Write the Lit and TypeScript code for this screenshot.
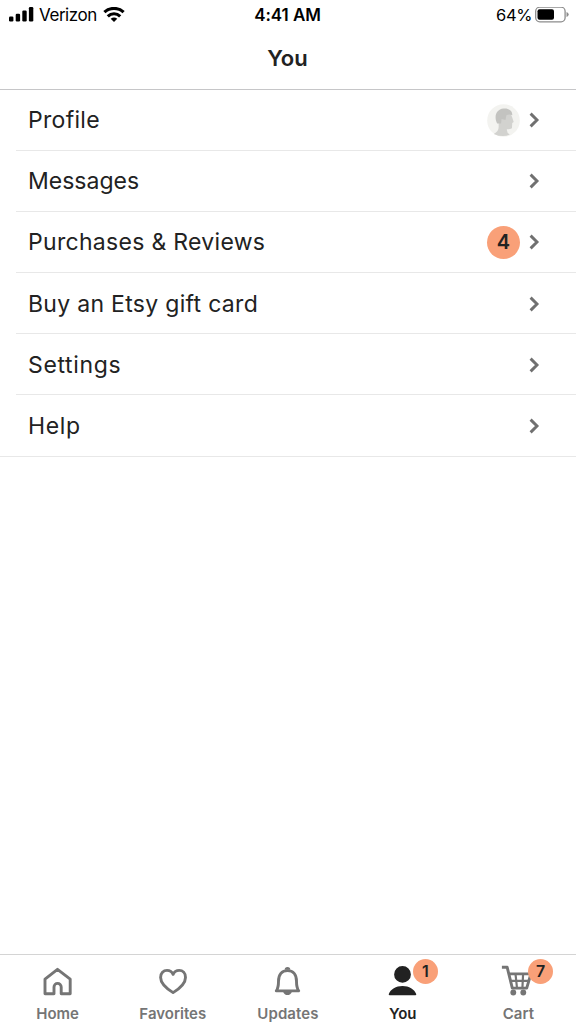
import { LitElement, html, css, svg, nothing } from "lit";
import { customElement } from "lit/decorators.js";

interface Row { label: string; cls: string; avatar?: boolean; count?: number; }
interface Tab { label: string; cls: string; icon: unknown; count?: number; active?: boolean; }

const rows: Row[] = [
  { label: "Profile", cls: "profile", avatar: true },
  { label: "Messages", cls: "messages" },
  { label: "Purchases & Reviews", cls: "purchases", count: 4 },
  { label: "Buy an Etsy gift card", cls: "gift" },
  { label: "Settings", cls: "settings" },
  { label: "Help", cls: "help" },
];

const home = svg`<path d="M5 29.8V15.2L17.5 5.3L30.2 15.2V29.8H21.200V23A3.600 3.600 0 0 0 14 23V29.8Z"/>`;
const heart = svg`<path d="M18.1 28.6C14 26 5.6 20.500 5.600 13.400C5.600 9.200 8.500 6.400 12 6.400C14.700 6.400 17 7.800 18.100 10.300C19.200 7.800 21.500 6.400 24.200 6.400C27.700 6.400 30.500 9.200 30.500 13.400C30.500 20.500 22.200 26 18.100 28.600Z"/>`;
const bell = svg`<path d="M6.300 26.900C8.300 24 8.500 21.500 8.500 17.200C8.500 10.500 11.800 6.600 17.500 6.600S26.500 10.500 26.500 17.200C26.500 21.500 26.700 24 28.700 26.900Z"/><path class="fill" d="M14.700 5.800a2.800 2.800 0 0 1 5.600 0zM13.200 28h8.600c-.7 2-2.300 3.100-4.300 3.100s-3.600-1.100-4.300-3.100z"/>`;
const person = svg`<path class="fill" d="M17.500 2a8.400 8.400 0 1 1 0 16.800a8.400 8.400 0 0 1 0-16.800zM3.700 30.200C5.500 25 11 21.900 17.500 21.900S29.500 25 31.300 30.200Q31.300 31.200 30.300 31.200H4.700Q3.700 31.200 3.700 30.200z"/>`;
const cart = svg`<path d="M1.900 3.300H7.200L12.300 24.100H26.700L30.900 9.900H9"/><path class="thin" d="M10.400 16.900H29.200M15.500 10L17 24M23.100 10L22.400 24"/><circle class="fill" cx="13.300" cy="28.500" r="2.900"/><circle class="fill" cx="23.300" cy="28.500" r="2.900"/>`;

const tabs: Tab[] = [
  { label: "Home", cls: "t-home", icon: home },
  { label: "Favorites", cls: "t-fav", icon: heart },
  { label: "Updates", cls: "t-upd", icon: bell },
  { label: "You", cls: "t-you", icon: person, count: 1, active: true },
  { label: "Cart", cls: "t-cart", icon: cart, count: 7 },
];

@customElement("app-root")
export class AppRoot extends LitElement {
  static styles = css`
    :host { display: flex; flex-direction: column; height: 100vh; overflow: hidden; background: #fff; color: #222; font-family: Inter, "Liberation Sans", sans-serif; }
    * { box-sizing: border-box; }
    svg { display: block; flex: none; }
    .status { display: grid; grid-template-columns: 1fr auto 1fr; align-items: center; height: 29px; padding: 0 7px 0 9px; color: #000; font-size: 17px; line-height: 29px; }
    .left, .right { display: flex; align-items: center; }
    .right { justify-content: flex-end; gap: 3px; }
    .carrier, .time, .percent { padding-top: 1px; line-height: 28px; }
    .carrier { margin: 0 6px 0 5px; letter-spacing: -0.45px; }
    .time { margin: 0 3px 0 0; font-weight: 600; letter-spacing: -0.05px; }
    .percent { font-size: 16.500px; letter-spacing: -0.4px; }
    .title { height: 61px; margin: 0; padding-right: 1px; border-bottom: 1px solid #c6c6c8; text-align: center; font-size: 22px; line-height: 59px; font-weight: 600; }
    .list { display: flex; flex-direction: column; border-bottom: 1px solid #e8e8e8; }
    .row { height: 61px; display: flex; align-items: center; margin-left: 16px; padding: 0 36px 0 12px; border-bottom: 1px solid #e8e8e8; font-size: 23px; }
    .row:nth-child(4), .row:nth-child(5) { padding-top: 1px; }
    .row:last-child { border-bottom: 0; }
    .label { flex: 1; white-space: nowrap; }
    .profile { letter-spacing: 0.3px; }
    .purchases { letter-spacing: 0.3px; }
    .gift { letter-spacing: 0.3px; }
    .settings { letter-spacing: 0.65px; }
    .help { letter-spacing: 0.65px; }
    .count { display: grid; place-items: center; width: 33px; height: 33px; border-radius: 50%; background: #f9a078; font-size: 20px; font-weight: 600; }
    .chevron { margin-left: 8px; }
    .tabs { display: grid; grid-template-columns: repeat(5, 1fr); height: 70px; margin-top: auto; border-top: 1px solid #d4d4d4; }
    .tab { display: flex; flex-direction: column; align-items: center; padding-top: 9px; color: #757575; font-size: 15px; font-weight: 600; line-height: 20px; }
    .tab.active { color: #222; }
    .t-upd { letter-spacing: 0.1px; }
    .t-you { padding-right: 1px; }
    .icon { position: relative; width: 36px; height: 40px; }
    .icon svg { fill: none; stroke: currentColor; stroke-width: 2.9; stroke-linejoin: round; }
    .icon .thin { stroke-width: 2.2; }
    .icon .fill { fill: currentColor; stroke: none; }
    .badge { position: absolute; left: 27.600px; top: -5.500px; width: 25px; height: 25px; border-radius: 50%; background: #f9a078; color: #222; text-align: center; font-size: 16px; line-height: 25px; }
  `;

  render() {
    return html`
      <div class="status">
        <div class="left">
          <svg width="25" height="16" viewBox="0 0 25 16"><rect x="0" y="9.500" width="4.400" height="5" rx="1.200"/><rect x="6.700" y="6.800" width="4.400" height="7.700" rx="1.200"/><rect x="13.300" y="3.500" width="4.400" height="11" rx="1.200"/><rect x="19.900" y="0" width="4.400" height="14.500" rx="1.200"/></svg>
          <span class="carrier">Verizon</span>
          <svg width="22" height="16" viewBox="0 0 22 16"><path fill="none" stroke="#000" stroke-width="3.200" d="M1.400 5.200C6.800 .2 15.200 .2 20.600 5.200M4.800 9.300C8.400 5.900 13.600 5.900 17.200 9.300"/><path d="M11 15L7.700 11.800Q11 9.200 14.300 11.800Z"/></svg>
        </div>
        <div class="time">4:41 AM</div>
        <div class="right">
          <span class="percent">64%</span>
          <svg width="34" height="16" viewBox="0 0 34 16"><rect x=".7" y=".2" width="29.400" height="14.600" rx="4" fill="none" stroke="#8c8c8c" stroke-width="1.300"/><rect x="2.500" y="2.200" width="16.500" height="10.600" rx="2"/><path fill="#8c8c8c" d="M31.500 5Q33.700 5.800 33.700 7.500T31.500 10Z"/></svg>
        </div>
      </div>
      <h1 class="title">You</h1>
      <div class="list">
        ${rows.map((r) => html`
          <div class="row">
            <span class="label"><span class=${r.cls}>${r.label}</span></span>
            ${r.avatar ? html`<svg width="33" height="33" viewBox="0 0 34 34"><circle cx="17" cy="17" r="16.800" fill="#f3f3f0"/><path fill="#d2d2cf" d="M12 13L24 9L26 14L27.500 18.500L26 19.500L25.700 25Q23 26.500 20.500 26Q20 29.500 23.500 31.500Q16 35 7 30.800Q12.500 28 12 22.500Z"/><path fill="#c3c3c0" d="M10.500 20C7 14 9 5.500 17 4.700C22 4 26.500 7 26 11.500Q23 10 20 11.500L19 16.500L15 15.500L14.500 20Z"/></svg>` : nothing}
            ${r.count ? html`<span class="count">${r.count}</span>` : nothing}
            <svg class="chevron" width="12" height="18" viewBox="0 0 12 18"><path d="M2.600 2.600L9 9L2.600 15.400" fill="none" stroke="#707070" stroke-width="2.900"/></svg>
          </div>`)}
      </div>
      <nav class="tabs">
        ${tabs.map((t) => html`
          <div class="tab ${t.active ? "active" : ""}">
            <div class="icon"><svg width="36" height="32" viewBox="0 0 36 32">${t.icon}</svg>${t.count ? html`<span class="badge">${t.count}</span>` : nothing}</div>
            <span class=${t.cls}>${t.label}</span>
          </div>`)}
      </nav>`;
  }
}
